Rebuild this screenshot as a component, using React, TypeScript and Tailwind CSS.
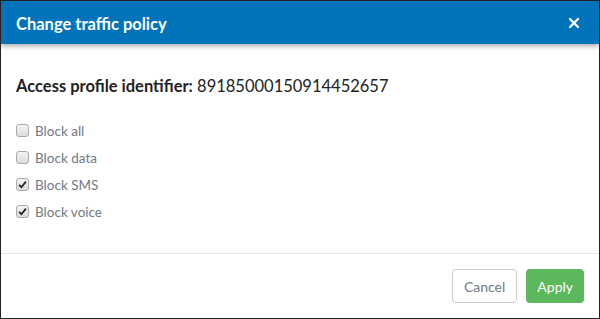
import { X } from "lucide-react";

const options = [
  { label: "Block all", checked: false },
  { label: "Block data", checked: false },
  { label: "Block SMS", checked: true },
  { label: "Block voice", checked: true },
];

function Box({ checked }: { checked: boolean }) {
  return (
    <span className="w-[13px] h-[13px] rounded-[3px] border border-[#a9a9a9] bg-gradient-to-b from-[#f4f4f4] to-[#dcdcdc] flex items-center justify-center shrink-0">
      {checked && (
        <svg width="9" height="9" viewBox="0 0 10 10">
          <path d="M1.2 5.4 L3.8 8 L8.8 1.8" fill="none" stroke="#222" strokeWidth="2" />
        </svg>
      )}
    </span>
  );
}

export default function App() {
  return (
    <div className="w-[600px] h-[319px] bg-white border border-[#222] flex flex-col font-['Lato',sans-serif] overflow-hidden">
      <div className="h-[43px] bg-[#0073bb] flex items-center justify-between pl-[15px] pr-[17px] pt-[3px] shadow-[0_2px_5px_rgba(0,0,0,0.35)] relative z-10">
        <h1 className="text-white font-bold text-[16.5px]">Change traffic policy</h1>
        <X className="w-[16px] h-[16px] text-white mb-[3px]" strokeWidth={3.5} />
      </div>
      <div className="flex-1 px-[15px] pt-[30px]">
        <p className="text-[16.5px] text-[#222]">
          <span className="font-bold">Access profile identifier:</span> 89185000150914452657
        </p>
        <ul className="mt-[23px] flex flex-col gap-[9px]">
          {options.map((o) => (
            <li key={o.label} className="flex items-center gap-[6px] h-[18px]">
              <Box checked={o.checked} />
              <span className="text-[13.5px] text-[#6f7a85]">{o.label}</span>
            </li>
          ))}
        </ul>
      </div>
      <div className="border-t border-[#e5e5e5] h-[65px] flex items-center justify-end gap-[9px] pr-[15px]">
        <button type="button" className="h-[34px] px-[11px] rounded border border-[#ccc] text-[14px] text-[#6f7a85] bg-white">
          Cancel
        </button>
        <button type="button" className="h-[34px] px-[11px] rounded bg-[#5cb85c] text-[14px] text-white">
          Apply
        </button>
      </div>
    </div>
  );
}
